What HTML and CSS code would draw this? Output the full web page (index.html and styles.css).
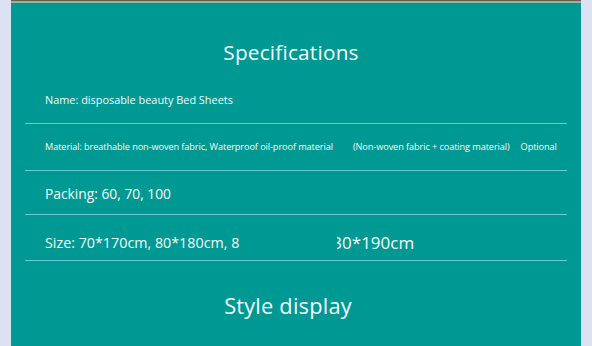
FILE: index.html
```html
<!DOCTYPE html>
<html>
<head>
<meta charset="utf-8">
<link rel="stylesheet" href="styles.css">
</head>
<body>
<div class="panel">
  <div class="topstrip"></div>
  <h2 class="title">Specifications</h2>
  <div class="row row-name"><span>Name: disposable beauty Bed Sheets</span></div>
  <div class="row row-material">
    <span>Material: breathable non-woven fabric, Waterproof oil-proof material</span>
    <span class="gap1">(Non-woven fabric + coating material)</span>
    <span class="gap2">Optional</span>
  </div>
  <div class="row row-packing"><span>Packing: 60, 70, 100</span></div>
  <div class="row row-size">
    <span>Size: 70*170cm, 80*180cm, 8</span>
    <span class="clip"><span class="clip-inner">30*190cm</span></span>
  </div>
  <h2 class="title title2">Style display</h2>
</div>
</body>
</html>
```
FILE: styles.css
```css
html, body {
  margin: 0;
  padding: 0;
}
body {
  background: #dce2f1;
  font-family: "Open Sans", "Noto Sans", sans-serif;
  color: #f2fbfa;
  width: 592px;
  height: 346px;
  overflow: hidden;
}
.panel {
  margin-left: 11px;
  width: 570px;
  height: 346px;
  background: #009893;
  display: flex;
  flex-direction: column;
}
.topstrip {
  height: 3px;
  background: linear-gradient(to bottom, #6d5a45 0, #6d5a45 1.5px, #8fb7a8 1.5px, #8fb7a8 3px);
}
.title {
  margin: 0;
  font-weight: 400;
  font-size: 20.8px;
  text-align: center;
  line-height: 30px;
  margin-top: 34px;
  padding-right: 10px;
  letter-spacing: 0.2px;
}
.row {
  margin: 0 14px;
  border-bottom: 1.5px solid #62cfcb;
  display: flex;
  align-items: center;
  padding-left: 20px;
  white-space: nowrap;
}
.row-name {
  height: 46px;
  font-size: 10.9px;
  margin-top: 11px;
  padding-bottom: 2px;
  box-sizing: border-box;
}
.row-material {
  height: 45.5px;
  font-size: 9.2px;
  letter-spacing: -0.1px;
}
.gap1 { margin-left: 20px; }
.gap2 { margin-left: 11px; }
.row-packing {
  height: 42.5px;
  padding-top: 1px;
  font-size: 13.8px;
  align-items: flex-start;
  line-height: 19px;
}
.row-packing span {
  margin-top: 12px;
}
.row-size {
  height: 34.5px;
  padding-top: 10px;
  font-size: 14.3px;
  align-items: center;
}
.clip {
  display: inline-block;
  overflow: hidden;
  margin-left: 98px;
  font-size: 17px;
}
.clip-inner {
  display: inline-block;
  margin-left: -5px;
}
.title2 {
  margin-top: 30px;
  font-size: 21.8px;
  padding-right: 16px;
}
```
